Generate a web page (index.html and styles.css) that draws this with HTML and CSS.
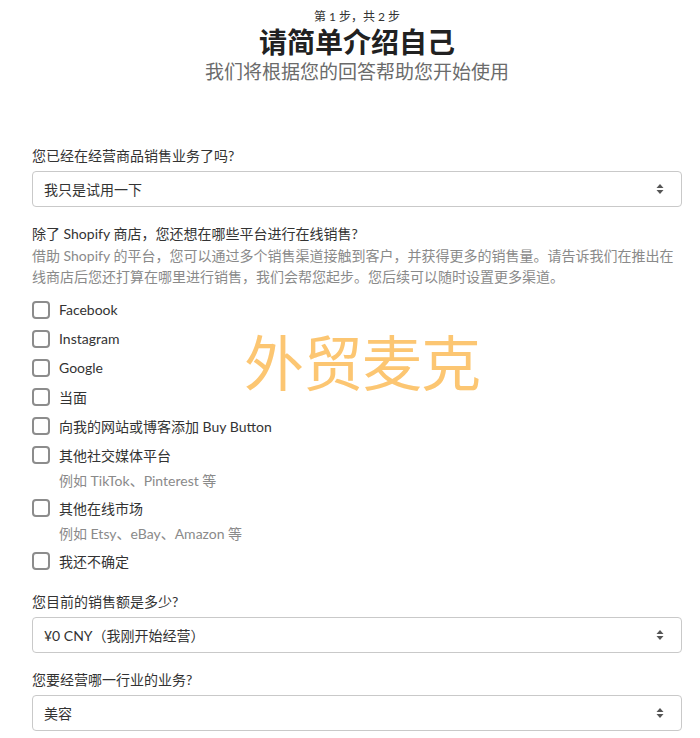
FILE: index.html
```html
<!DOCTYPE html>
<html lang="zh-CN">
<head>
    <meta charset="UTF-8">
    <title>请简单介绍自己</title>
<link rel="stylesheet" href="styles.css">
</head>
<body>

<section class="page">
    <div class="intro">
        <p class="step">第 1 步，共 2 步</p>
        <h1>请简单介绍自己</h1>
        <p class="subtitle">我们将根据您的回答帮助您开始使用</p>
    </div>

    <form class="survey">
        <div class="field">
            <label class="field-label" for="selling">您已经在经营商品销售业务了吗?</label>
            <div class="select-wrap">
                <select id="selling">
                    <option>我只是试用一下</option>
                </select>
                <svg class="select-arrow" width="10" height="14" viewBox="0 0 10 14"><path d="M5 2 L8.5 6 L1.5 6 Z M5 12 L8.5 8 L1.5 8 Z" fill="#555"/></svg>
            </div>
        </div>

        <div class="field">
            <p class="field-label">除了 Shopify 商店，您还想在哪些平台进行在线销售?</p>
            <p class="help">借助 Shopify 的平台，您可以通过多个销售渠道接触到客户，并获得更多的销售量。请告诉我们在推出在线商店后您还打算在哪里进行销售，我们会帮您起步。您后续可以随时设置更多渠道。</p>

            <ul class="channels">
                <li><label class="check"><input type="checkbox"><span class="box"></span>Facebook</label></li>
                <li><label class="check"><input type="checkbox"><span class="box"></span>Instagram</label></li>
                <li><label class="check"><input type="checkbox"><span class="box"></span>Google</label></li>
                <li><label class="check"><input type="checkbox"><span class="box"></span>当面</label></li>
                <li><label class="check"><input type="checkbox"><span class="box"></span>向我的网站或博客添加 Buy Button</label></li>
                <li>
                    <label class="check"><input type="checkbox"><span class="box"></span>其他社交媒体平台</label>
                    <p class="hint">例如 TikTok、Pinterest 等</p>
                </li>
                <li>
                    <label class="check"><input type="checkbox"><span class="box"></span>其他在线市场</label>
                    <p class="hint">例如 Etsy、eBay、Amazon 等</p>
                </li>
                <li><label class="check"><input type="checkbox"><span class="box"></span>我还不确定</label></li>
            </ul>
        </div>

        <div class="field">
            <label class="field-label" for="revenue">您目前的销售额是多少?</label>
            <div class="select-wrap">
                <select id="revenue">
                    <option>¥0 CNY（我刚开始经营）</option>
                </select>
                <svg class="select-arrow" width="10" height="14" viewBox="0 0 10 14"><path d="M5 2 L8.5 6 L1.5 6 Z M5 12 L8.5 8 L1.5 8 Z" fill="#555"/></svg>
            </div>
        </div>

        <div class="field">
            <label class="field-label" for="industry">您要经营哪一行业的业务?</label>
            <div class="select-wrap">
                <select id="industry">
                    <option>美容</option>
                </select>
                <svg class="select-arrow" width="10" height="14" viewBox="0 0 10 14"><path d="M5 2 L8.5 6 L1.5 6 Z M5 12 L8.5 8 L1.5 8 Z" fill="#555"/></svg>
            </div>
        </div>
    </form>

    <div class="watermark">外贸麦克</div>
</section>

</body>
</html>
```

FILE: styles.css
```css
body {
  margin: 0;
  font-family: Lato, "Noto Sans CJK SC", sans-serif;
  color: #333;
  background: #fff;
}

.page {
  position: relative;
  width: 650px;
  margin-left: 32px;
  padding-top: 8px;
}

.intro {
  text-align: center;
}

.step {
  margin: 0;
  font-size: 12px;
  line-height: 18px;
  color: #333;
}

h1 {
  margin: 0;
  font-family: "Noto Sans CJK SC", sans-serif;
  font-size: 28px;
  line-height: 30px;
  font-weight: 700;
  color: #212121;
}

.subtitle {
  margin: 3px 0 0;
  font-family: "Noto Sans CJK SC", sans-serif;
  font-size: 19px;
  line-height: 24px;
  color: #6b6b6b;
}

.survey {
  margin-top: 63px;
}

.field {
  margin-bottom: 17px;
}

.field-label {
  display: block;
  margin: 0 0 5px;
  font-size: 14px;
  line-height: 20px;
  color: #333;
}

p.field-label {
  margin-bottom: 0;
}

.help {
  margin: 1px 0 0;
  font-size: 14px;
  line-height: 21px;
  color: #8a8a8a;
}

.select-wrap {
  position: relative;
}

select {
  appearance: none;
  -webkit-appearance: none;
  display: block;
  width: 100%;
  height: 36px;
  padding: 0 30px 0 11px;
  font-family: inherit;
  font-size: 14px;
  color: #333;
  background: #fff;
  border: 1px solid #c9c9c9;
  border-radius: 4px;
  box-sizing: border-box;
}

.select-arrow {
  position: absolute;
  right: 17px;
  top: 11px;
  pointer-events: none;
}

.channels {
  list-style: none;
  margin: 8px 0 0;
  padding: 0;
}

.check {
  display: flex;
  align-items: center;
  height: 29px;
  font-size: 14px;
  color: #333;
  cursor: pointer;
}

.check input {
  display: none;
}

.box {
  width: 14px;
  height: 14px;
  margin-right: 9px;
  border: 2px solid #8c8c8c;
  border-radius: 4px;
  background: #fff;
}

.hint {
  margin: 0;
  padding-left: 27px;
  font-size: 14px;
  line-height: 24px;
  color: #8a8a8a;
}

.watermark {
  position: absolute;
  left: 212px;
  top: 320px;
  font-family: "Noto Sans CJK SC", sans-serif;
  font-size: 60px;
  line-height: 80px;
  color: #fcc672;
  letter-spacing: -1px;
  pointer-events: none;
}
```
